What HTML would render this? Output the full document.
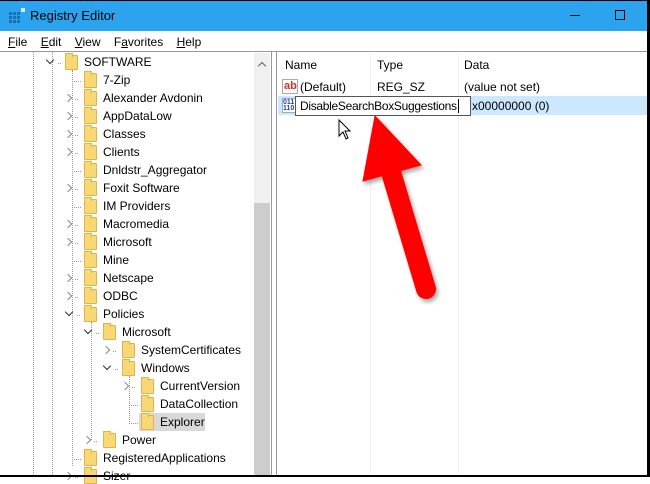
<!DOCTYPE html>
<html><head><style>
*{margin:0;padding:0;box-sizing:border-box}
body{width:650px;height:477px;overflow:hidden;background:#fff;font-family:"Liberation Sans",sans-serif;font-size:12px;color:#000;position:relative}
.a{position:absolute;white-space:nowrap}
.f{position:absolute;width:13px;height:15px;background:#f8d775;border:1px solid #e2b34a;border-radius:1px}
.f:before{content:"";position:absolute;left:-1px;top:-3px;width:6px;height:3px;background:#f8d775;border:1px solid #e2b34a;border-bottom:none}
.c{position:absolute;width:6px;height:6px;border-right:1.5px solid #888;border-bottom:1.5px solid #888}
.r{transform:rotate(-45deg)}
.d{transform:rotate(45deg)}
.dc{border-color:#333}
.vl{position:absolute;border-left:1px dotted #999}
.hl{position:absolute;border-top:1px dotted #999;width:9px}
</style></head><body>
<div class="a" style="left:0;top:0;width:650px;height:31px;background:#2ba3ef;border-top:1px solid #000"></div>
<svg class="a" style="left:8px;top:7px" width="18" height="17" viewBox="0 0 18 17"><g fill="#1a6fb0"><rect x="1" y="5" width="3" height="3"/><rect x="5" y="5" width="3" height="3"/><rect x="9" y="5" width="3" height="3"/><rect x="1" y="9" width="3" height="3"/><rect x="5" y="9" width="3" height="3"/><rect x="9" y="9" width="3" height="3"/><rect x="1" y="13" width="3" height="3"/><rect x="5" y="13" width="3" height="3"/><rect x="9" y="13" width="3" height="3"/></g><rect x="13" y="1" width="4" height="4" fill="#fff" opacity=".8"/></svg>
<div class="a" style="left:30px;top:8px;font-size:13px">Registry Editor</div>
<div class="a" style="left:570px;top:15px;width:10px;border-top:1px solid #000"></div>
<div class="a" style="left:615px;top:10px;width:10px;height:10px;border:1px solid #000"></div>
<div class="a" style="left:8px;top:35px;font-size:12px"><u>F</u>ile&nbsp;&nbsp;&nbsp;&nbsp;<u>E</u>dit&nbsp;&nbsp;&nbsp;&nbsp;<u>V</u>iew&nbsp;&nbsp;&nbsp;&nbsp;F<u>a</u>vorites&nbsp;&nbsp;&nbsp;&nbsp;<u>H</u>elp</div>
<div class="a" style="left:0;top:51px;width:647px;height:1px;background:#999"></div>
<div class="a" style="left:271px;top:52px;width:1px;height:425px;background:#999"></div>
<div class="a" style="left:276px;top:52px;width:1px;height:425px;background:#999"></div>
<div class="a" style="left:254px;top:53px;width:16px;height:422px;background:#f0f0f0"></div>
<div class="a" style="left:254px;top:203px;width:16px;height:272px;background:#cdcdcd"></div>
<div class="c" style="left:259px;top:63px;transform:rotate(-135deg);border-color:#606060"></div>
<div class="vl" style="left:33px;top:52px;height:423px"></div>
<div class="vl" style="left:52px;top:52px;height:423px"></div>
<div class="vl" style="left:72px;top:70px;height:396px"></div>
<div class="vl" style="left:91px;top:322px;height:118px"></div>
<div class="vl" style="left:129px;top:376px;height:46px"></div>

<div id="t"></div>
<script>
var rows=[[0,"SOFTWARE",'d'],[1,"7-Zip",''],[1,"Alexander Avdonin",'r'],[1,"AppDataLow",'r'],[1,"Classes",'r'],[1,"Clients",'r'],[1,"Dnldstr_Aggregator",''],[1,"Foxit Software",'r'],[1,"IM Providers",''],[1,"Macromedia",'r'],[1,"Microsoft",'r'],[1,"Mine",''],[1,"Netscape",'r'],[1,"ODBC",'r'],[1,"Policies",'d'],[2,"Microsoft",'d'],[3,"SystemCertificates",'r'],[3,"Windows",'d'],[4,"CurrentVersion",'r'],[4,"DataCollection",''],[4,"Explorer",'',1],[2,"Power",'r'],[1,"RegisteredApplications",''],[1,"Sizer",'r']];
var h="";
rows.forEach(function(r,i){var y=54+i*18,fx=65+19*r[0];
if(r[3])h+='<div class="a" style="left:'+(fx-2)+'px;top:'+(y-1)+'px;width:66px;height:18px;background:#d9d9d9"></div>';
h+='<div class="f" style="left:'+fx+'px;top:'+(y+1)+'px"></div>';
h+='<div class="a" style="left:'+(fx+19)+'px;top:'+(y+1)+'px">'+r[1]+'</div>';
if(r[2]=='r')h+='<div class="c r" style="left:'+(fx-19)+'px;top:'+(y+5)+'px"></div><div class="hl" style="left:'+(fx-9)+'px;top:'+(y+9)+'px;width:3px"></div>';
else if(r[2]=='d')h+='<div class="c d dc" style="left:'+(fx-18)+'px;top:'+(y+3)+'px"></div><div class="hl" style="left:'+(fx-7)+'px;top:'+(y+9)+'px;width:3px"></div>';
else h+='<div class="hl" style="left:'+(fx-12)+'px;top:'+(y+9)+'px"></div>';});
document.getElementById('t').innerHTML=h;
</script>
<div class="a" style="left:0;top:475px;width:650px;height:2px;background:#000"></div>
<div class="a" style="left:647px;top:0;width:3px;height:477px;background:#000"></div>
<div class="a" style="left:370px;top:53px;width:1px;height:422px;background:#eef2f8"></div>
<div class="a" style="left:458px;top:53px;width:1px;height:422px;background:#eef2f8"></div>
<div class="a" style="left:285px;top:58px">Name</div>
<div class="a" style="left:377px;top:58px">Type</div>
<div class="a" style="left:464px;top:58px">Data</div>
<div class="a" style="left:282px;top:79px;width:16px;height:15px;border:1px solid #aaa;background:#fff;color:#d03020;font-weight:bold;font-size:11px;line-height:12px;padding-left:1px">ab</div>
<div class="a" style="left:300px;top:80px">(Default)</div>
<div class="a" style="left:377px;top:80px">REG_SZ</div>
<div class="a" style="left:464px;top:80px">(value not set)</div>
<div class="a" style="left:278px;top:96px;width:369px;height:19px;background:#cce8ff"></div>
<div class="a" style="left:282px;top:98px;width:16px;height:15px;border:1px solid #aaa;background:#fff;color:#2040c0;font-weight:bold;font-size:7px;line-height:6px;padding-top:1px">011<br>110</div>
<div class="a" style="left:295px;top:96px;width:176px;height:20px;border:1px solid #555;background:#fff"></div>
<div class="a" style="left:300px;top:99px;letter-spacing:-0.3px">DisableSearchBoxSuggestions<span style="display:inline-block;width:1px;height:14px;background:#000;vertical-align:-3px;margin-left:1px"></span></div>
<div class="a" style="left:472px;top:99px">x00000000 (0)</div>
<svg class="a" style="left:338px;top:119px" width="14" height="22" viewBox="0 0 14 22"><path d="M1 1 L1 17 L5 13 L8 20 L10 19 L7 12 L12 12 Z" fill="#fff" stroke="#000" stroke-width="1"/></svg>
<svg class="a" style="left:0;top:0" width="650" height="477"><defs><filter id="s" filterUnits="userSpaceOnUse" x="0" y="0" width="650" height="477"><feDropShadow dx="2" dy="3" stdDeviation="2" flood-opacity=".35"/></filter></defs><g fill="#f00" stroke="#f00" filter="url(#s)"><line x1="391" y1="172" x2="426" y2="289" stroke-width="20" stroke-linecap="round"/><polygon points="375,116 421,165 363,181" stroke-width="1"/></g></svg>
</body></html>
